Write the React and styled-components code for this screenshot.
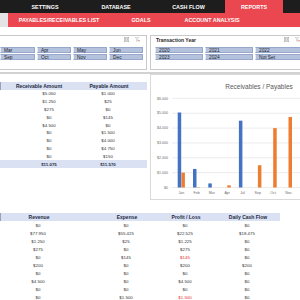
import React from 'react'
import styled, { createGlobalStyle } from 'styled-components'

const GlobalStyle = createGlobalStyle`
  html, body { margin: 0; padding: 0; background: #fff; }
  body { font-family: "Liberation Sans", Arial, sans-serif; }
`

const RED = '#ea4750'
const BAND = '#d9e1f2'

const Page = styled.div`
  width: 300px;
  height: 300px;
  overflow: hidden;
  background: #fff;
`

const TopNav = styled.div`
  display: flex;
  height: 13px;
  padding-left: 10px;
  background: #1d1d1d;
`

const NavTab = styled.div`
  flex: 0 0 ${p => p.$w}px;
  display: flex;
  align-items: center;
  justify-content: center;
  font-size: 5.4px;
  font-weight: bold;
  color: #fff;
  white-space: nowrap;
  background: ${p => (p.$active ? RED : 'transparent')};
`

const SubNav = styled.div`
  display: flex;
  height: 14px;
  background: ${RED};
`

const SubNavStub = styled.div`
  flex: 0 0 8px;
  background: #e4e4e4;
`

const SlicerRow = styled.div`
  display: flex;
  gap: 3px;
  height: 35px;
  margin-top: 8px;
`

const Slicer = styled.div`
  flex: 0 0 ${p => p.$w}px;
  box-sizing: border-box;
  border: 1px solid #c9c9c9;
  border-left: ${p => (p.$cut ? 'none' : '1px solid #c9c9c9')};
  padding: 0 3px 0 ${p => (p.$cut ? 0 : 4)}px;
`

const SlicerHead = styled.div`
  display: flex;
  align-items: center;
  height: 7px;
  margin-bottom: 4px;
  padding-left: ${p => (p.$cut ? 0 : 1)}px;
  font-size: 5px;
  font-weight: bold;
  color: #262626;
  white-space: nowrap;
`

const HeadIcons = styled.div`
  display: flex;
  gap: 6px;
  margin-left: auto;
  padding-right: 3px;
`

const ButtonGrid = styled.div`
  display: grid;
  grid-template-columns: ${p => p.$cols};
  grid-auto-rows: 6px;
  gap: 1px 2px;
`

const SlicerButton = styled.div`
  box-sizing: border-box;
  background: #b4c2de;
  border: 0.5px solid #98a8cb;
  border-left: 1px solid #e8ecf5;
  padding-left: 3px;
  font-size: 4.8px;
  line-height: 5px;
  color: #1e1e1e;
  white-space: nowrap;
`

const Rule = styled.div`
  height: 2px;
  margin-top: 2px;
  background: #d2d2d2;
`

const MainRow = styled.div`
  display: flex;
  gap: 3px;
  height: 126px;
`

const LeftCol = styled.div`
  flex: 0 0 147px;
  padding-top: 8px;
`

const Row = styled.div`
  display: grid;
  grid-template-columns: ${p => p.$cols};
  width: ${p => p.$w}px;
  height: ${p => p.$h}px;
  align-items: center;
  background: ${p => (p.$band ? BAND : 'transparent')};
  border-left: ${p => (p.$head ? '1.5px solid #9aa3b5' : 'none')};
  box-sizing: border-box;
  font-size: ${p => (p.$head ? 5 : 4.4)}px;
  font-weight: ${p => (p.$bold ? 'bold' : 'normal')};
  color: ${p => (p.$bold ? '#1f2b45' : '#333')};
  white-space: nowrap;
  & > :first-child {
    justify-self: start;
    width: 76px;
    padding-left: ${p => p.$lead || 0}px;
    box-sizing: border-box;
  }
`

const Cell = styled.div`
  text-align: center;
  color: ${p => (p.$neg ? '#e0302e' : 'inherit')};
`

const ChartBox = styled.div`
  flex: 0 0 218px;
  box-sizing: border-box;
  border: 1px solid #d9d9d9;
  display: flex;
  flex-direction: column;
`

const ChartTitle = styled.div`
  margin-top: 8px;
  height: 8px;
  line-height: 8px;
  text-align: center;
  font-size: 6.5px;
  color: #595959;
`

const Plot = styled.svg`
  display: block;
  flex: 0 0 auto;
`

const Summary = styled.div`
  margin-top: 13px;
`

function MultiIcon() {
  return (
    <svg width="5" height="5" viewBox="0 0 10 10">
      <rect x="0.5" y="0.5" width="9" height="9" fill="none" stroke="#9a9a9a" />
      <path d="M2 3h2M5 3h3M2 5h2M5 5h3M2 7h2M5 7h3" stroke="#8c8c8c" strokeWidth="1" />
    </svg>
  )
}

function ClearIcon() {
  return (
    <svg width="5" height="5" viewBox="0 0 10 10">
      <path d="M0.5 0.5h7l-2.8 3.6v3.8l-1.4 1v-4.8z" fill="none" stroke="#b0b0b0" />
      <path d="M6.5 6l3 3M9.5 6l-3 3" stroke="#c04040" strokeWidth="0.9" />
    </svg>
  )
}

const months = [
  ['Mar', 'Apr', 'May', 'Jun'],
  ['Sep', 'Oct', 'Nov', 'Dec'],
]
const years = [
  ['2020', '2021', '2022'],
  ['2023', '2024', 'Not Set'],
]

const ledger = [
  ['$5.050', '$1.000'],
  ['$1.250', '$25'],
  ['$275', '$0'],
  ['$0', '$145'],
  ['$4.500', '$0'],
  ['$0', '$1.500'],
  ['$0', '$4.000'],
  ['$0', '$4.750'],
  ['$0', '$150'],
]

const chartData = [
  ['Jan', 5050, 1000],
  ['Feb', 1250, 25],
  ['Mar', 275, 0],
  ['Apr', 0, 145],
  ['Jul', 4500, 0],
  ['Sep', 0, 1500],
  ['Oct', 0, 4000],
  ['Nov', 0, 4750],
]

const flows = [
  ['$0', '$0', '$0', '$0'],
  ['$77.950', '$55.425', '$22.525', '$18.475'],
  ['$1.250', '$25', '$1.225', '$0'],
  ['$275', '$0', '$275', '$0'],
  ['$0', '$145', '-$145', '$0'],
  ['$200', '$0', '$200', '$200'],
  ['$0', '$0', '$0', '$0'],
  ['$4.500', '$0', '$4.500', '$0'],
  ['$0', '$0', '$0', '$0'],
  ['$0', '$1.500', '-$1.500', '$0'],
]

function Chart() {
  const y = v => 96.5 - v * 0.01485
  const ticks = [0, 1000, 2000, 3000, 4000, 5000, 6000]
  const fmt = v => (v === 0 ? '$0' : `$${v / 1000}.000`)
  return (
    <Plot width="216" height="107" viewBox="0 0 216 107">
      {ticks.map(t => (
        <g key={t}>
          <line x1="21" x2="216" y1={y(t)} y2={y(t)} stroke="#dedede" strokeWidth="0.6" />
          <text x="17" y={y(t) + 1.2} fontSize="3.6" fill="#6a6a6a" textAnchor="end">
            {fmt(t)}
          </text>
        </g>
      ))}
      {chartData.map(([m, r, p], i) => {
        const x = 26.7 + i * 15.3
        return (
          <g key={m}>
            <rect x={x} y={y(r)} width="3.5" height={96.5 - y(r)} fill="#4472c4" />
            <rect x={x + 3.7} y={y(p)} width="3.5" height={96.5 - y(p)} fill="#ed7d31" />
            <text x={x + 3.6} y="103.3" fontSize="3.6" fill="#6a6a6a" textAnchor="middle">
              {m}
            </text>
          </g>
        )
      })}
    </Plot>
  )
}

export default function App() {
  return (
    <Page>
      <GlobalStyle />
      <TopNav>
        <NavTab $w={70}>SETTINGS</NavTab>
        <NavTab $w={72}>DATABASE</NavTab>
        <NavTab $w={73}>CASH FLOW</NavTab>
        <NavTab $w={58} $active>REPORTS</NavTab>
      </TopNav>
      <SubNav>
        <SubNavStub />
        <NavTab $w={102}>PAYABLES/RECEIVABLES LIST</NavTab>
        <NavTab $w={62}>GOALS</NavTab>
        <NavTab $w={80}>ACCOUNT ANALYSIS</NavTab>
      </SubNav>

      <SlicerRow>
        <Slicer $w={147} $cut>
          <SlicerHead $cut>
            <HeadIcons>
              <MultiIcon />
              <ClearIcon />
            </HeadIcons>
          </SlicerHead>
          <ButtonGrid $cols="35px 34px 34px 34px">
            {months.flat().map(m => (
              <SlicerButton key={m}>{m}</SlicerButton>
            ))}
          </ButtonGrid>
        </Slicer>
        <Slicer $w={157}>
          <SlicerHead>
            Transaction Year
            <HeadIcons>
              <MultiIcon />
              <ClearIcon />
            </HeadIcons>
          </SlicerHead>
          <ButtonGrid $cols="48px 48px 48px">
            {years.flat().map(yr => (
              <SlicerButton key={yr}>{yr}</SlicerButton>
            ))}
          </ButtonGrid>
        </Slicer>
      </SlicerRow>
      <Rule />

      <MainRow>
        <LeftCol>
          <Row $cols="76px 64px" $w={147} $h={8} $band $head $bold>
            <Cell>Receivable Amount</Cell>
            <Cell>Payable Amount</Cell>
          </Row>
          {ledger.map(([r, p], i) => (
            <Row key={i} $cols="76px 64px" $w={147} $h={7.8} $lead={22}>
              <Cell>{r}</Cell>
              <Cell>{p}</Cell>
            </Row>
          ))}
          <Row $cols="76px 64px" $w={147} $h={7.8} $band $bold $lead={22}>
            <Cell>$11.075</Cell>
            <Cell>$11.570</Cell>
          </Row>
        </LeftCol>
        <ChartBox>
          <ChartTitle>Receivables / Payables</ChartTitle>
          <Chart />
        </ChartBox>
      </MainRow>

      <Summary>
        <Row $cols="100px 52px 66px 58px" $w={280} $h={8} $band $head $bold>
          <Cell>Revenue</Cell>
          <Cell>Expense</Cell>
          <Cell>Profit / Loss</Cell>
          <Cell>Daily Cash Flow</Cell>
        </Row>
        {flows.map((row, i) => (
          <Row key={i} $cols="100px 52px 66px 58px" $w={280} $h={8}>
            {row.map((v, j) => (
              <Cell key={j} $neg={v.startsWith('-')}>
                {v.replace('-', '')}
              </Cell>
            ))}
          </Row>
        ))}
      </Summary>
    </Page>
  )
}
